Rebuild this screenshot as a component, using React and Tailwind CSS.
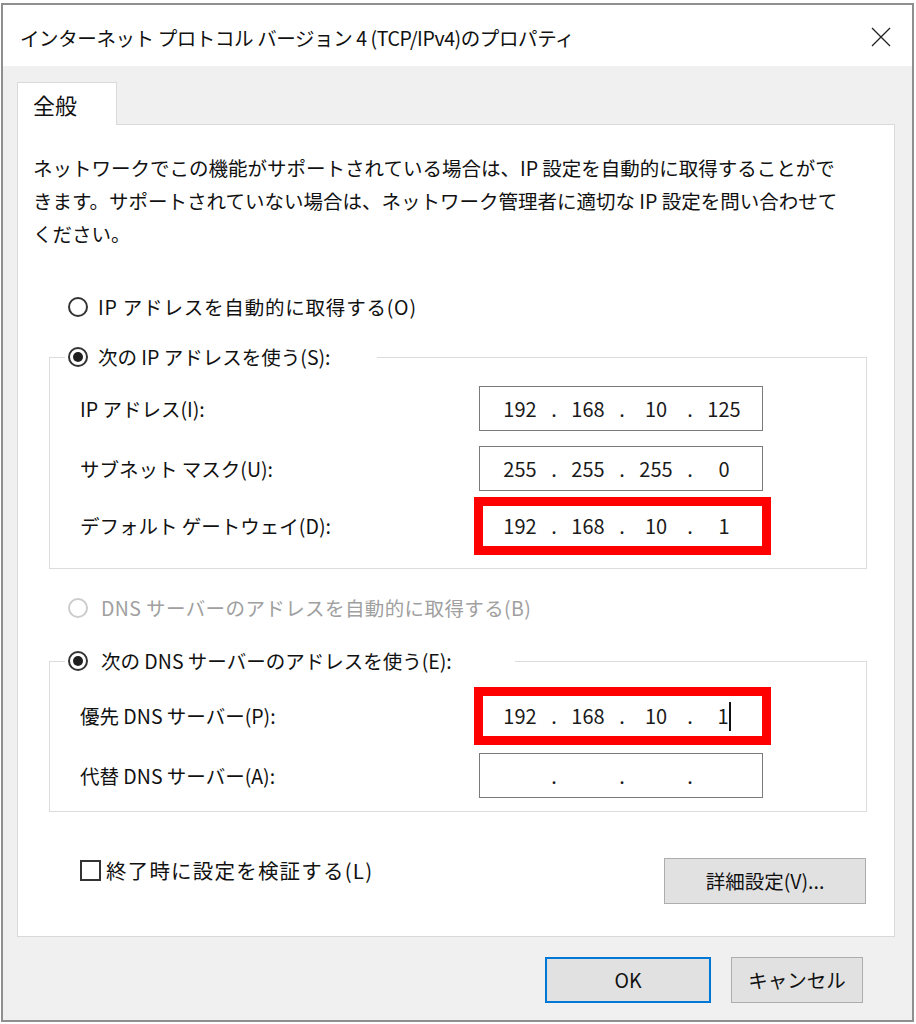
import React from 'react';

const IP = ['192', '168', '10', '125'];

function Radio({ checked, disabled }) {
  return (
    <span className={`w-[20px] h-[20px] rounded-full border-2 flex items-center justify-center shrink-0 bg-white ${disabled ? 'border-[#cccccc]' : 'border-[#333333]'}`}>
      {checked && <span className="w-[10px] h-[10px] rounded-full bg-[#1f1f1f]" />}
    </span>
  );
}

function Segments({ parts, cursor }) {
  return (
    <div className="flex items-center text-[20px] text-[#1a1a1a]">
      {parts.map((p, i) => (
        <React.Fragment key={i}>
          {i > 0 && <span className="w-[18px] text-center">.</span>}
          {cursor && i === 3 ? (
            <span className="w-[50px] flex items-center justify-center">
              <span>{p}</span>
              <span className="w-[2px] h-[29px] bg-[#111111]" />
            </span>
          ) : (
            <span className="w-[50px] text-center">{p}</span>
          )}
        </React.Fragment>
      ))}
    </div>
  );
}

function IpField({ parts, red, cursor }) {
  if (red) {
    return (
      <div className="-ml-[5px] w-[297px] h-[58px] border-[9px] border-[#ff0000] bg-white flex items-center pl-[12px]">
        <Segments parts={parts} cursor={cursor} />
      </div>
    );
  }
  return (
    <div className="w-[284px] h-[45px] border border-[#7a7a7a] bg-white flex items-center pl-[15px]">
      <Segments parts={parts} />
    </div>
  );
}

function Row({ label, children, className }) {
  return (
    <div className={`grid grid-cols-[399px_auto] items-center pl-[30px] ${className}`}>
      <span>{label}</span>
      {children}
    </div>
  );
}

export default function App() {
  return (
    <div className="w-[916px] h-[1024px] bg-white pt-[3px] pl-[1px] overflow-hidden font-['Noto_Sans_CJK_JP',sans-serif] text-[#111111]">
      <div className="w-[913px] h-[1019px] border-2 border-[#8f8f8f] flex flex-col">
        {/* Title bar */}
        <div className="h-[61px] bg-white flex items-center justify-between pl-[17px] pr-[21px] pt-[4px]">
          <span className="text-[19.5px] tracking-[-0.4px] whitespace-nowrap">インターネット プロトコル バージョン 4 (TCP/IPv4)のプロパティ</span>
          <svg width="20" height="20" viewBox="0 0 20 20" className="-mt-[1px]">
            <path d="M1 1 L19 19 M19 1 L1 19" stroke="#222" strokeWidth="1.3" fill="none" />
          </svg>
        </div>

        {/* Body */}
        <div className="flex-1 bg-[#f0f0f0] px-[14px] pt-[16px]">
          <div className="relative z-10 -mb-px w-[100px] h-[43px] border border-b-0 border-[#d9d9d9] bg-white flex items-center pl-[15px] text-[22px]">
            全般
          </div>
          <div className="w-[878px] h-[813px] border border-[#d9d9d9] bg-white text-[19.5px]">
            <p className="pt-[26px] pl-[15px] leading-[33px] whitespace-nowrap">
              ネットワークでこの機能がサポートされている場合は、IP 設定を自動的に取得することがで<br />
              きます。サポートされていない場合は、ネットワーク管理者に適切な IP 設定を問い合わせて<br />
              ください。
            </p>

            <div className="mt-[42px] h-[30px] pl-[50px] flex items-center gap-[10px]">
              <Radio />
              <span className="tracking-[0.8px]">IP アドレスを自動的に取得する(O)</span>
            </div>

            {/* Group 1 */}
            <div className="relative mt-[35px] ml-[31px] w-[818px] border border-[#dcdcdc] pb-[13px]">
              <div className="absolute left-[15px] -top-[16px] h-[30px] w-[312px] bg-white pl-[3px] flex items-center gap-[10px]">
                <Radio checked />
                <span>次の IP アドレスを使う(S):</span>
              </div>
              <Row label="IP アドレス(I):" className="mt-[28px]">
                <IpField parts={IP} />
              </Row>
              <Row label="サブネット マスク(U):" className="mt-[15px]">
                <IpField parts={['255', '255', '255', '0']} />
              </Row>
              <Row label="デフォルト ゲートウェイ(D):" className="mt-[6px]">
                <IpField parts={['192', '168', '10', '1']} red />
              </Row>
            </div>

            <div className="mt-[24px] h-[30px] pl-[50px] flex items-center gap-[13px] text-[#a0a0a0]">
              <Radio disabled />
              <span className="tracking-[0.4px]">DNS サーバーのアドレスを自動的に取得する(B)</span>
            </div>

            {/* Group 2 */}
            <div className="relative mt-[38px] ml-[31px] w-[818px] border border-[#dcdcdc] pb-[13px]">
              <div className="absolute left-[15px] -top-[16px] h-[30px] w-[450px] bg-white pl-[3px] flex items-center gap-[13px]">
                <Radio checked />
                <span>次の DNS サーバーのアドレスを使う(E):</span>
              </div>
              <Row label="優先 DNS サーバー(P):" className="mt-[25px]">
                <IpField parts={['192', '168', '10', '1']} red cursor />
              </Row>
              <Row label="代替 DNS サーバー(A):" className="mt-[8px]">
                <IpField parts={['', '', '', '']} />
              </Row>
            </div>

            <div className="mt-[46px] flex items-start justify-between pl-[62px] pr-[28px]">
              <div className="h-[24px] flex items-center gap-[5px]">
                <span className="w-[21px] h-[21px] border-2 border-[#333333] bg-white" />
                <span className="text-[20.5px] tracking-[1.2px]">終了時に設定を検証する(L)</span>
              </div>
              <button className="w-[202px] h-[46px] bg-[#e1e1e1] border border-[#adadad] flex items-center justify-center">
                詳細設定(V)...
              </button>
            </div>
          </div>

          {/* Footer */}
          <div className="mt-[20px] flex justify-end gap-[20px] pr-[35px] text-[19.5px]">
            <button className="w-[166px] h-[46px] bg-[#e1e1e1] border-2 border-[#0078d7] flex items-center justify-center">
              OK
            </button>
            <button className="w-[132px] h-[46px] bg-[#e1e1e1] border border-[#adadad] flex items-center justify-center">
              キャンセル
            </button>
          </div>
        </div>
      </div>
    </div>
  );
}
